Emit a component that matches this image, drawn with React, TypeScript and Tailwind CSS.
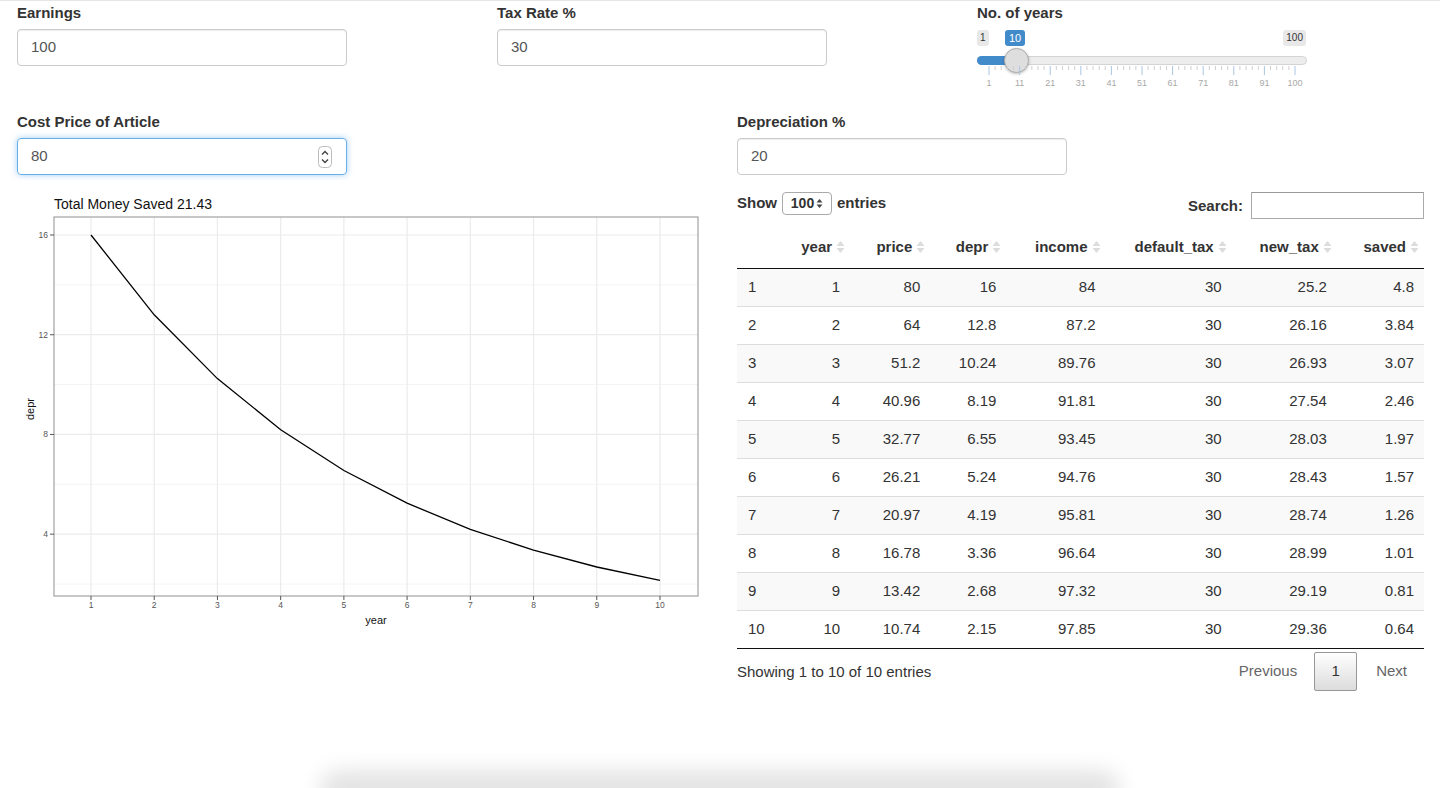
import { useState } from "react";

const rows = [
  [1, 1, "80", "16", "84", "30", "25.2", "4.8"],
  [2, 2, "64", "12.8", "87.2", "30", "26.16", "3.84"],
  [3, 3, "51.2", "10.24", "89.76", "30", "26.93", "3.07"],
  [4, 4, "40.96", "8.19", "91.81", "30", "27.54", "2.46"],
  [5, 5, "32.77", "6.55", "93.45", "30", "28.03", "1.97"],
  [6, 6, "26.21", "5.24", "94.76", "30", "28.43", "1.57"],
  [7, 7, "20.97", "4.19", "95.81", "30", "28.74", "1.26"],
  [8, 8, "16.78", "3.36", "96.64", "30", "28.99", "1.01"],
  [9, 9, "13.42", "2.68", "97.32", "30", "29.19", "0.81"],
  [10, 10, "10.74", "2.15", "97.85", "30", "29.36", "0.64"],
];

const columns = [
  { name: "", width: "w-[50px]" },
  { name: "year", width: "w-[63px]" },
  { name: "price", width: "w-[80px]" },
  { name: "depr", width: "w-[76px]" },
  { name: "income", width: "w-[99px]" },
  { name: "default_tax", width: "w-[126px]" },
  { name: "new_tax", width: "w-[105px]" },
  { name: "saved", width: "w-[87px]" },
];

const depr = [16, 12.8, 10.24, 8.192, 6.5536, 5.2429, 4.1943, 3.3554, 2.6844, 2.1475];

function SortIcon() {
  return (
    <svg width="9" height="14" viewBox="0 0 9 14" className="ml-[4px] shrink-0">
      <path d="M0.5 6 L4.5 1 L8.5 6 Z" fill="#dcdcdc" />
      <path d="M0.5 8 L4.5 13 L8.5 8 Z" fill="#dcdcdc" />
    </svg>
  );
}

function TextInput({ label, value, focused }: { label: string; value: string; focused?: boolean }) {
  return (
    <div>
      <div className="h-[21px] text-[15px] font-bold text-[#333] leading-[21px]">{label}</div>
      <div
        className={
          focused
            ? "mt-[6px] w-[330px] h-[37px] rounded-[4px] border border-[#66afe9] shadow-[0_0_6px_rgba(102,175,233,0.6)] flex items-center px-[13px] text-[15px] text-[#555]"
            : "mt-[6px] w-[330px] h-[37px] rounded-[4px] border border-[#ccc] shadow-[inset_0_1px_1px_rgba(0,0,0,0.075)] flex items-center px-[13px] text-[15px] text-[#555]"
        }
      >
        <span className="flex-1">{value}</span>
        {focused && (
          <svg width="14" height="22" viewBox="0 0 14 22" className="mr-[1px]">
            <rect x="0.5" y="0.5" width="13" height="21" rx="4" fill="none" stroke="#bbb" />
            <path d="M4 8.5 L7 5.5 L10 8.5" fill="none" stroke="#444" strokeWidth="1.4" />
            <path d="M4 13.5 L7 16.5 L10 13.5" fill="none" stroke="#444" strokeWidth="1.4" />
          </svg>
        )}
      </div>
    </div>
  );
}

function YearSlider() {
  const ticks: JSX.Element[] = [];
  for (let i = 0; i <= 10; i++) {
    const x = 12 + i * 30.6;
    ticks.push(<line key={`M${i}`} x1={x} x2={x} y1={0} y2={9} stroke="#a9c6e4" strokeWidth="1" />);
    if (i < 10) {
      for (let j = 1; j < 5; j++) {
        const mx = x + j * 6.12;
        ticks.push(<line key={`m${i}-${j}`} x1={mx} x2={mx} y1={0} y2={4} stroke="#cfcfcf" strokeWidth="1" />);
      }
    }
  }
  const labels = ["1", "11", "21", "31", "41", "51", "61", "71", "81", "91", "100"];
  return (
    <div>
      <div className="h-[21px] text-[15px] font-bold text-[#333] leading-[21px]">No. of years</div>
      <div className="relative mt-[5px] w-[330px] h-[63px]">
        <span className="absolute left-0 top-[2px] h-[16px] px-[3px] rounded-[3px] bg-[#e8e8e8] text-[10px] leading-[16px] text-[#333]">1</span>
        <span className="absolute left-[28px] top-[2px] h-[16px] px-[4px] rounded-[3px] bg-[#428bca] text-[11px] leading-[16px] text-white">10</span>
        <span className="absolute right-[1px] top-[2px] h-[16px] px-[3px] rounded-[3px] bg-[#e8e8e8] text-[10px] leading-[16px] text-[#333]">100</span>
        <div className="absolute left-0 right-0 top-[28px] h-[9px] rounded-full bg-[#ededed] border border-[#d4d4d4]" />
        <div className="absolute left-0 w-[40px] top-[28px] h-[9px] rounded-l-full bg-[#428bca]" />
        <div className="absolute left-[27px] top-[20px] w-[25px] h-[25px] rounded-full bg-[#dedede] border border-[#ababab] shadow-[0_1px_3px_rgba(0,0,0,0.25)]" />
        <svg width="330" height="26" className="absolute left-0 top-[38px]">
          {ticks}
          {labels.map((l, i) => (
            <text key={l} x={12 + i * 30.6} y={20} fontSize="9" fill="#a8a8a8" textAnchor="middle" fontFamily="Liberation Sans, Arial, sans-serif">
              {l}
            </text>
          ))}
        </svg>
      </div>
    </div>
  );
}

function DeprChart() {
  const px = (yr: number) => 74 + (yr - 1) * 63.22;
  const py = (v: number) => 44 + (16 - v) * 24.93;
  const pts = depr.map((v, i) => `${px(i + 1).toFixed(1)},${py(v).toFixed(1)}`).join(" ");
  const font = "Liberation Sans, Arial, sans-serif";
  return (
    <svg width="700" height="445" className="block">
      <text x="37" y="18" fontSize="14" fill="#111" fontFamily={font}>Total Money Saved 21.43</text>
      <rect x="37" y="26" width="644" height="379" fill="#fff" />
      {[2, 6, 10, 14].map((v) => (
        <line key={`n${v}`} x1="37" x2="681" y1={py(v)} y2={py(v)} stroke="#f4f4f4" strokeWidth="1" />
      ))}
      {[4, 8, 12, 16].map((v) => (
        <line key={`g${v}`} x1="37" x2="681" y1={py(v)} y2={py(v)} stroke="#ebebeb" strokeWidth="1.2" />
      ))}
      {[1, 2, 3, 4, 5, 6, 7, 8, 9, 10].map((yr) => (
        <line key={`v${yr}`} x1={px(yr)} x2={px(yr)} y1="26" y2="405" stroke="#ebebeb" strokeWidth="1.2" />
      ))}
      <polyline points={pts} fill="none" stroke="#000" strokeWidth="1.3" />
      <rect x="37" y="26" width="644" height="379" fill="none" stroke="#8f8f8f" strokeWidth="1" />
      {[4, 8, 12, 16].map((v) => (
        <g key={`t${v}`}>
          <line x1="33" x2="37" y1={py(v)} y2={py(v)} stroke="#555" />
          <text x="31" y={py(v) + 3} fontSize="8.5" fill="#555" textAnchor="end" fontFamily={font}>{v}</text>
        </g>
      ))}
      {[1, 2, 3, 4, 5, 6, 7, 8, 9, 10].map((yr) => (
        <g key={`x${yr}`}>
          <line x1={px(yr)} x2={px(yr)} y1="405" y2="409" stroke="#555" />
          <text x={px(yr)} y="417" fontSize="8.5" fill="#555" textAnchor="middle" fontFamily={font}>{yr}</text>
        </g>
      ))}
      <text x="359" y="433" fontSize="11" fill="#111" textAnchor="middle" fontFamily={font}>year</text>
      <text x="0" y="0" fontSize="11" fill="#111" textAnchor="middle" fontFamily={font} transform="translate(17 218) rotate(-90)">depr</text>
    </svg>
  );
}

function DataTable() {
  const [page] = useState(1);
  return (
    <div className="w-[687px] text-[15px] text-[#333]">
      <div className="h-[37px] flex items-start justify-between">
        <div className="flex items-center h-[25px] mt-[1px] font-bold">
          <span>Show</span>
          <div className="mx-[5px] h-[23px] w-[50px] rounded-[4px] border border-[#aaa] flex items-center justify-center gap-[2px] text-[14px] font-bold bg-white">
            <span>100</span>
            <svg width="7" height="11" viewBox="0 0 7 11">
              <path d="M0.5 4.5 L3.5 1 L6.5 4.5 Z" fill="#444" />
              <path d="M0.5 6.5 L3.5 10 L6.5 6.5 Z" fill="#444" />
            </svg>
          </div>
          <span>entries</span>
        </div>
        <div className="flex items-center h-[28px] mt-[1px] font-bold">
          <span className="mr-[8px] mt-[2px]">Search:</span>
          <div className="w-[173px] h-[27px] border border-[#aaa] border-t-[#999] bg-white" />
        </div>
      </div>
      <table className="w-full table-fixed border-collapse">
        <thead>
          <tr className="h-[41px] border-b border-[#111]">
            {columns.map((c) => (
              <th key={c.name || "idx"} className={`${c.width} pr-[5px] font-bold`}>
                {c.name && (
                  <div className="flex items-center justify-end">
                    <span>{c.name}</span>
                    <SortIcon />
                  </div>
                )}
              </th>
            ))}
          </tr>
        </thead>
        <tbody>
          {rows.map((r, i) => (
            <tr key={i} className={i % 2 === 0 ? "h-[38px] bg-[#f9f9f9] border-t border-[#ddd]" : "h-[38px] bg-white border-t border-[#ddd]"}>
              {r.map((cell, j) => (
                <td key={j} className={j === 0 ? "pl-[11px] text-left" : "pr-[10px] text-right"}>
                  {cell}
                </td>
              ))}
            </tr>
          ))}
        </tbody>
      </table>
      <div className="border-t border-[#111] flex items-start justify-between">
        <div className="mt-[12px]">Showing 1 to 10 of 10 entries</div>
        <div className="flex items-center mt-[3px]">
          <span className="pl-[16px] pr-[17px] text-[#666]">Previous</span>
          <span className="w-[43px] h-[39px] flex items-center justify-center rounded-[2px] border border-[#979797] bg-gradient-to-b from-white to-[#dcdcdc] text-[#333]">
            {page}
          </span>
          <span className="pl-[19px] pr-[17px] text-[#666]">Next</span>
        </div>
      </div>
    </div>
  );
}

export default function App() {
  return (
    <div className="relative h-[788px] overflow-hidden bg-white border-t border-[#e6e6e6] font-['Liberation_Sans',Arial,sans-serif] flex flex-col">
      <div className="pl-[2px] pt-[1px] grid grid-cols-[480px_480px_480px] h-[110px]">
        <div className="px-[15px]">
          <TextInput label="Earnings" value="100" />
        </div>
        <div className="px-[15px]">
          <TextInput label="Tax Rate %" value="30" />
        </div>
        <div className="px-[15px]">
          <YearSlider />
        </div>
      </div>
      <div className="pl-[2px] grid grid-cols-[720px_720px]">
        <div className="px-[15px]">
          <TextInput label="Cost Price of Article" value="80" focused />
          <div className="mt-[16px]">
            <DeprChart />
          </div>
        </div>
        <div className="px-[15px]">
          <TextInput label="Depreciation %" value="20" />
          <div className="mt-[15px]">
            <DataTable />
          </div>
        </div>
      </div>
      <div className="mt-auto flex justify-center">
        <div className="w-[800px] h-[40px] mb-[-22px] rounded-[20px] bg-[#e4e4e4] blur-[10px]" />
      </div>
    </div>
  );
}
